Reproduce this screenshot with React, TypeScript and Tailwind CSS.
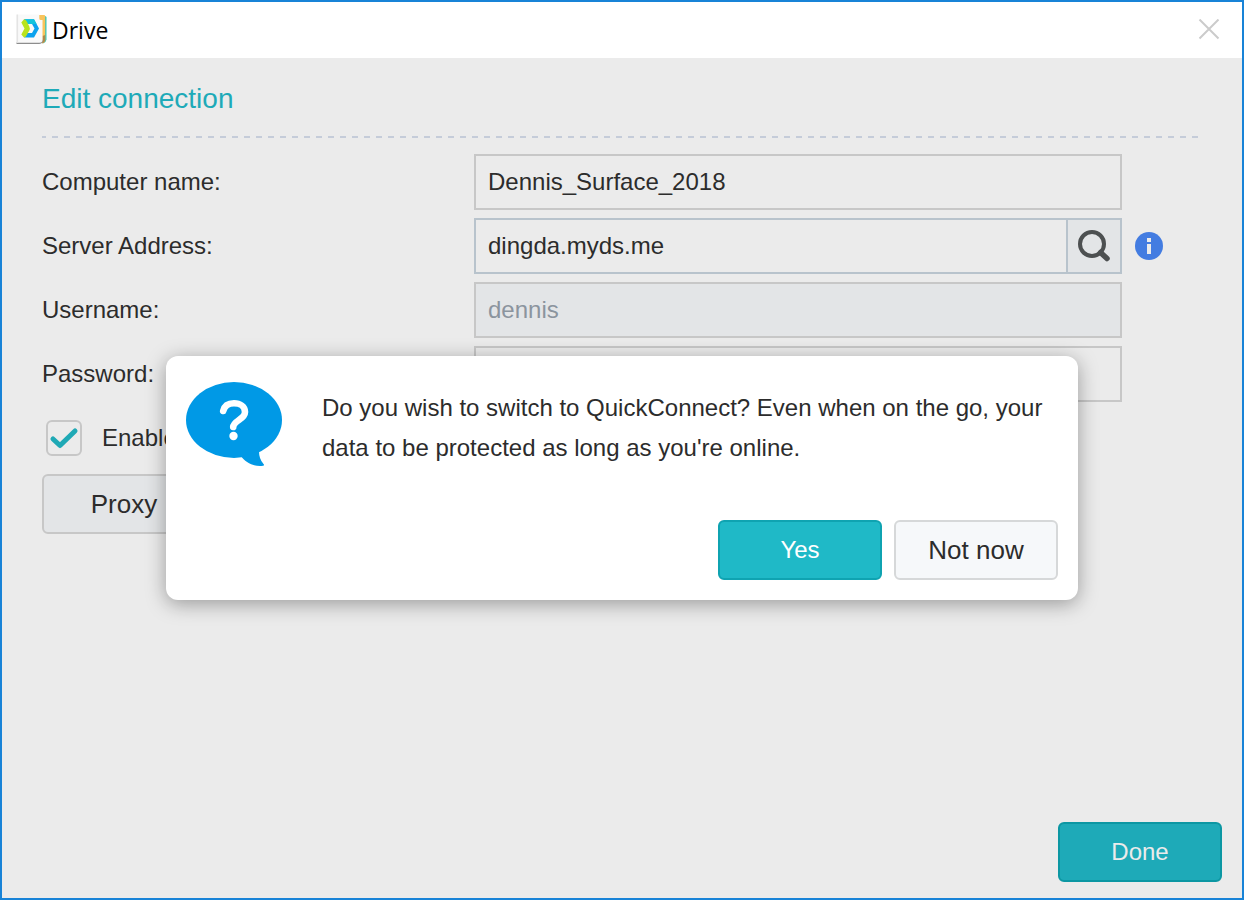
import type { ReactNode } from "react";

const fieldBase =
  "h-14 w-full min-w-0 rounded-none border-2 border-[#c7c7c7] bg-[#ebebeb] px-3 text-2xl text-[#2c2c2c] outline-none";

function DriveLogo() {
  return (
    <svg width="32" height="32" viewBox="0 0 32 32" aria-hidden="true">
      <path d="M26 2h3q1.500 0 1.500 1.500v22q0 2-3.500 4z" fill="#3cc4b8" />
      <path d="M22 1h6q1.200 0 1.200 1.200v24q0 2-3 3.300z" fill="#f9c45c" />
      <path d="M26.500 27v-5l2.700-1v5.500q0 2-3.200 3z" fill="#b08a4a" />
      <path d="M0.500 28h24q2-1 2-3l0.500 2q-1 3-4 3H0.500z" fill="#8d8d8d" />
      <path d="M0.500 0.500h22.800v4q0 1.500 1.500 1.500h1.700v19.500q0 3.200-3 3.200H0.500z" fill="#f9f9f9" />
      <path d="M0.500 0.500h1.600v28.200H0.500z" fill="#e4e4e4" />
      <path d="M8 5.200h10l5 9.300-5 9h-10l3-4.500h5l2.500-4.500-2.500-4.500h-5z" fill="#0aa2ee" />
      <path d="M8 5.200h10l2.600 4.800h-9.600z" fill="#12c4dc" />
      <path d="M8 5.200L5.300 8.500 8.500 14.500l-3.200 6L8 23.500q1.500 0 2.500-2l2.800-5q1-2 0-4L10.500 7Q9.500 5.200 8 5.200z" fill="#b9e31d" />
    </svg>
  );
}

function SearchIcon() {
  return (
    <svg width="36" height="36" viewBox="0 0 36 36" fill="none" stroke="#4d5051" aria-hidden="true">
      <circle cx="16" cy="16" r="12" strokeWidth="4" />
      <path d="M24.500 24.500l6.500 6" strokeWidth="5.500" strokeLinecap="round" />
    </svg>
  );
}

function InfoIcon() {
  return (
    <svg width="28" height="28" viewBox="0 0 28 28" aria-hidden="true">
      <circle cx="14" cy="14" r="14" fill="#437ce1" />
      <path d="M12 6h4v4h-4zM12 12h4v10h-4z" fill="#ebebeb" />
    </svg>
  );
}

function QuestionBubble() {
  return (
    <svg width="96" height="84" viewBox="0 0 96 84" className="shrink-0" aria-hidden="true">
      <ellipse cx="48" cy="38" rx="48" ry="38" fill="#0099e6" />
      <path d="M55 74C59 80 67 85 77 83.800Q78.800 83.500 77.500 82Q73 77 73 69.500z" fill="#0099e6" />
      <path
        d="M37.200 29C38.500 23.500 42.500 21.300 48 21.300C54 21.300 59 24.500 59 30C59 37.500 47.500 38.500 47.200 45"
        fill="none"
        stroke="#fff"
        strokeWidth="6.600"
        strokeLinecap="round"
      />
      <circle cx="47.500" cy="54" r="4.200" fill="#fff" />
    </svg>
  );
}

function Field({ id, label, aside, children }: { id: string; label: string; aside?: ReactNode; children: ReactNode }) {
  return (
    <div className="flex items-center">
      <label htmlFor={id} className="w-[432px] shrink-0 text-2xl">
        {label}
      </label>
      <div className="flex min-w-0 flex-1">{children}</div>
      <div className="flex w-20 shrink-0 pl-[13px]">{aside}</div>
    </div>
  );
}

export default function App() {
  return (
    <div className="flex min-h-screen flex-col border-2 border-[#1883d7] bg-[#ebebeb] font-['Liberation_Sans',Arial,sans-serif] text-[#2c2c2c]">
      <header className="flex h-14 items-center justify-between bg-white pr-[21px] pl-3.5">
        <div className="flex items-center gap-1">
          <DriveLogo />
          <h1 className="font-['Open_Sans',sans-serif] text-[23px] text-black">Drive</h1>
        </div>
        <button type="button" aria-label="Close" className="flex size-6 items-center justify-center">
          <svg width="22" height="22" viewBox="0 0 22 22" stroke="#cbcbcb" strokeWidth="2" aria-hidden="true">
            <path d="M1.500 0.500l19 19M20.500 0.500l-19 19" />
          </svg>
        </button>
      </header>

      <main className="relative flex flex-1 flex-col">
        <form className="flex flex-1 flex-col px-10 pt-5" onSubmit={(e) => e.preventDefault()}>
          <h2 className="text-[28px] leading-[42px] text-[#1eaab8]">Edit connection</h2>
          <div className="mt-4 mr-1 h-0.5 bg-[repeating-linear-gradient(90deg,#c5ccd9_0_4px,transparent_4px_10px,#c5ccd9_10px_12px)]" />

          <div className="mt-4 flex flex-col gap-2">
            <Field id="computer" label="Computer name:">
              <input id="computer" type="text" defaultValue="Dennis_Surface_2018" className={fieldBase} />
            </Field>
            <Field
              id="server"
              label="Server Address:"
              aside={
                <button type="button" aria-label="About the server address">
                  <InfoIcon />
                </button>
              }
            >
              <div className="flex h-14 w-full border-2 border-[#b8c3cc]">
                <input
                  id="server"
                  type="text"
                  defaultValue="dingda.myds.me"
                  className="min-w-0 flex-1 bg-[#ebebeb] px-3 text-2xl outline-none"
                />
                <button
                  type="button"
                  aria-label="Search"
                  className="flex w-[54px] items-center justify-center border-l-2 border-[#b8c3cc] bg-[#e3e5e7]"
                >
                  <SearchIcon />
                </button>
              </div>
            </Field>
            <Field id="username" label="Username:">
              <input
                id="username"
                type="text"
                disabled
                defaultValue="dennis"
                className="h-14 w-full min-w-0 border-2 border-[#c7c7c7] bg-[#e3e5e7] px-3 text-2xl text-[#8b949e]"
              />
            </Field>
            <Field id="password" label="Password:">
              <input id="password" type="password" className={fieldBase} />
            </Field>
          </div>

          <div className="mt-4 flex h-10 items-center gap-5 pl-1">
            <span className="grid size-9">
              <input
                id="ssl"
                type="checkbox"
                defaultChecked
                className="peer col-start-1 row-start-1 size-9 appearance-none rounded-md border-2 border-[#c7c7c7]"
              />
              <svg
                viewBox="0 0 36 36"
                fill="none"
                stroke="#1fa9b5"
                strokeWidth="5"
                strokeLinecap="round"
                strokeLinejoin="round"
                className="pointer-events-none invisible col-start-1 row-start-1 size-9 peer-checked:visible"
                aria-hidden="true"
              >
                <path d="M7 19l7 6.500L29 11" />
              </svg>
            </span>
            <label htmlFor="ssl" className="text-2xl">
              Enable
            </label>
          </div>
          <button
            type="button"
            className="mt-4 h-15 w-41 rounded-md border-2 border-[#c7c7c7] bg-[#e3e5e7] text-[26px]"
          >
            Proxy
          </button>
        </form>

        <footer className="flex justify-end pr-5 pb-4">
          <button
            type="button"
            className="h-15 w-41 rounded-md border-2 border-[#0c97a3] bg-[#1eaab8] text-2xl text-[#ebebeb]"
          >
            Done
          </button>
        </footer>

        <div className="absolute inset-0 flex items-center justify-center">
          <div
            role="dialog"
            aria-modal="true"
            aria-labelledby="switch-message"
            className="w-full max-w-[912px] rounded-xl bg-white p-5 shadow-[0_4px_20px_rgba(0,0,0,0.35)]"
          >
            <div className="flex items-start gap-10 pt-1.5">
              <QuestionBubble />
              <p id="switch-message" className="pt-1.5 text-2xl leading-10">
                Do you wish to switch to QuickConnect? Even when on the go, your data to be protected as long as
                you&apos;re online.
              </p>
            </div>
            <div className="mt-13 flex justify-end gap-3">
              <button
                type="button"
                className="h-15 w-41 rounded-md border-2 border-[#0fa3b1] bg-[#1fb9c7] text-2xl text-white"
              >
                Yes
              </button>
              <button
                type="button"
                className="h-15 w-41 rounded-md border-2 border-[#d6d8d9] bg-[#f6f8fa] text-[26px]"
              >
                Not now
              </button>
            </div>
          </div>
        </div>
      </main>
    </div>
  );
}
